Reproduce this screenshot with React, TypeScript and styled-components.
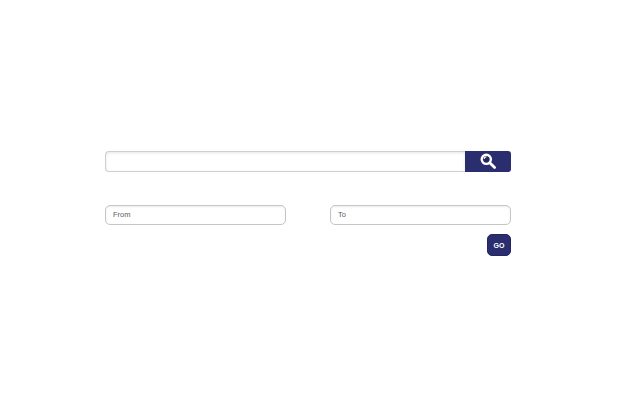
import styled, { createGlobalStyle } from "styled-components";

const GlobalStyle = createGlobalStyle`
	html, body {
		margin: 0;
		padding: 0;
		background: #fff;
		font-family: "Liberation Sans", Arial, sans-serif;
	}
`;

const Page = styled.div`
	width: 640px;
	height: 400px;
	box-sizing: border-box;
	padding: 151px 129px 0 105px;
	display: flex;
	flex-direction: column;
`;

const SearchRow = styled.div`
	display: flex;
	height: 21px;
`;

const SearchInput = styled.input`
	flex: 1;
	min-width: 0;
	box-sizing: border-box;
	border: 1px solid #cfcfcf;
	border-right: none;
	border-radius: 4px 0 0 4px;
	box-shadow: inset 0 1px 3px #e6e6e6;
	outline: none;
`;

const SearchButton = styled.button`
	width: 46px;
	padding: 0;
	border: none;
	border-radius: 0 3px 3px 0;
	background: #2b2e6e;
	display: flex;
	align-items: center;
	justify-content: center;
`;

const DateRow = styled.div`
	display: flex;
	justify-content: space-between;
	margin-top: 33px;
`;

const DateInput = styled.input`
	width: 181px;
	height: 20px;
	box-sizing: border-box;
	padding: 0 7px 1px;
	border: 1px solid #c6c6c6;
	border-radius: 5px;
	box-shadow: inset 0 1px 2px #ececec;
	outline: none;
	font-family: inherit;
	font-size: 7.5px;
	color: #555;
	&::placeholder {
		color: #5c5c5c;
		opacity: 1;
	}
`;

const ActionRow = styled.div`
	display: flex;
	justify-content: flex-end;
	margin-top: 9px;
`;

const GoButton = styled.button`
	width: 24px;
	height: 22px;
	padding: 0;
	border: 1px solid #23265f;
	border-radius: 5px;
	background: #2b2e6e;
	color: #fff;
	font-family: inherit;
	font-size: 7px;
	font-weight: 700;
`;

const App = () => {
	return (
		<>
			<GlobalStyle />
			<Page>
				<SearchRow>
					<SearchInput />
					<SearchButton aria-label="Search">
						<svg width="17" height="17" viewBox="0 0 17 17" fill="none">
							<circle cx="6.3" cy="6.3" r="4.6" fill="#23265f" stroke="#fff" strokeWidth="2.4" />
							<path d="M4.2 6a2.2 2.2 0 0 1 2.2-2.2" stroke="#fff" strokeWidth="1.2" />
							<path d="M10 10L14.6 14.6" stroke="#fff" strokeWidth="2.8" strokeLinecap="round" />
						</svg>
					</SearchButton>
				</SearchRow>
				<DateRow>
					<DateInput placeholder="From" />
					<DateInput placeholder="To" />
				</DateRow>
				<ActionRow>
					<GoButton>GO</GoButton>
				</ActionRow>
			</Page>
		</>
	);
};

export default App;
